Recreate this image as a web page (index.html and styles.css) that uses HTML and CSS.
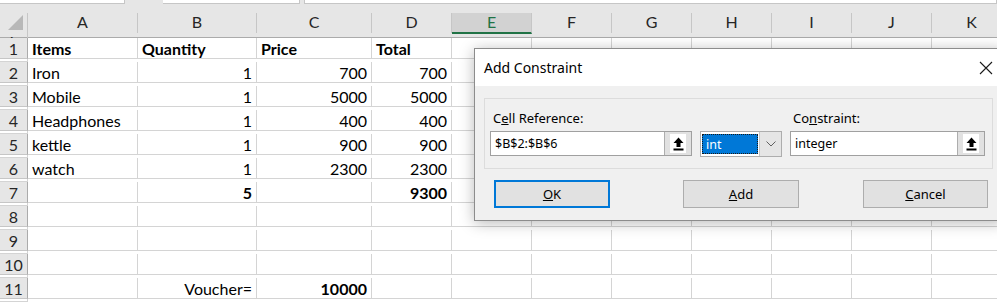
FILE: index.html
```html
<!DOCTYPE html>
<html lang="en">
<head>
    <meta charset="UTF-8">
    <title>Solver - Add Constraint</title>
    <link rel="stylesheet" href="styles.css">
</head>
<body>
    <div class="sheet">
        <div class="top-strip">
            <span class="strip-box box-1"></span>
            <span class="strip-box box-2"></span>
            <span class="strip-box box-3"></span>
        </div>

        <div class="row head-row">
            <div class="corner"><span class="corner-tri"></span></div>
            <div class="col-head">A</div>
            <div class="col-head">B</div>
            <div class="col-head">C</div>
            <div class="col-head">D</div>
            <div class="col-head selected">E</div>
            <div class="col-head">F</div>
            <div class="col-head">G</div>
            <div class="col-head">H</div>
            <div class="col-head">I</div>
            <div class="col-head">J</div>
            <div class="col-head">K</div>
            <div class="col-head">L</div>
        </div>

        <div class="row">
            <div class="row-head">1</div>
            <div class="cell bold">Items</div>
            <div class="cell bold">Quantity</div>
            <div class="cell bold">Price</div>
            <div class="cell bold">Total</div>
            <div class="cell"></div><div class="cell"></div><div class="cell"></div><div class="cell"></div>
            <div class="cell"></div><div class="cell"></div><div class="cell"></div><div class="cell"></div>
        </div>
        <div class="row">
            <div class="row-head">2</div>
            <div class="cell">Iron</div>
            <div class="cell num">1</div>
            <div class="cell num">700</div>
            <div class="cell num">700</div>
            <div class="cell"></div><div class="cell"></div><div class="cell"></div><div class="cell"></div>
            <div class="cell"></div><div class="cell"></div><div class="cell"></div><div class="cell"></div>
        </div>
        <div class="row">
            <div class="row-head">3</div>
            <div class="cell">Mobile</div>
            <div class="cell num">1</div>
            <div class="cell num">5000</div>
            <div class="cell num">5000</div>
            <div class="cell"></div><div class="cell"></div><div class="cell"></div><div class="cell"></div>
            <div class="cell"></div><div class="cell"></div><div class="cell"></div><div class="cell"></div>
        </div>
        <div class="row">
            <div class="row-head">4</div>
            <div class="cell">Headphones</div>
            <div class="cell num">1</div>
            <div class="cell num">400</div>
            <div class="cell num">400</div>
            <div class="cell"></div><div class="cell"></div><div class="cell"></div><div class="cell"></div>
            <div class="cell"></div><div class="cell"></div><div class="cell"></div><div class="cell"></div>
        </div>
        <div class="row">
            <div class="row-head">5</div>
            <div class="cell">kettle</div>
            <div class="cell num">1</div>
            <div class="cell num">900</div>
            <div class="cell num">900</div>
            <div class="cell"></div><div class="cell"></div><div class="cell"></div><div class="cell"></div>
            <div class="cell"></div><div class="cell"></div><div class="cell"></div><div class="cell"></div>
        </div>
        <div class="row">
            <div class="row-head">6</div>
            <div class="cell">watch</div>
            <div class="cell num">1</div>
            <div class="cell num">2300</div>
            <div class="cell num">2300</div>
            <div class="cell"></div><div class="cell"></div><div class="cell"></div><div class="cell"></div>
            <div class="cell"></div><div class="cell"></div><div class="cell"></div><div class="cell"></div>
        </div>
        <div class="row">
            <div class="row-head">7</div>
            <div class="cell"></div>
            <div class="cell num bold">5</div>
            <div class="cell"></div>
            <div class="cell num bold">9300</div>
            <div class="cell"></div><div class="cell"></div><div class="cell"></div><div class="cell"></div>
            <div class="cell"></div><div class="cell"></div><div class="cell"></div><div class="cell"></div>
        </div>
        <div class="row">
            <div class="row-head">8</div>
            <div class="cell"></div><div class="cell"></div><div class="cell"></div><div class="cell"></div>
            <div class="cell"></div><div class="cell"></div><div class="cell"></div><div class="cell"></div>
            <div class="cell"></div><div class="cell"></div><div class="cell"></div><div class="cell"></div>
        </div>
        <div class="row">
            <div class="row-head">9</div>
            <div class="cell"></div><div class="cell"></div><div class="cell"></div><div class="cell"></div>
            <div class="cell"></div><div class="cell"></div><div class="cell"></div><div class="cell"></div>
            <div class="cell"></div><div class="cell"></div><div class="cell"></div><div class="cell"></div>
        </div>
        <div class="row">
            <div class="row-head">10</div>
            <div class="cell"></div><div class="cell"></div><div class="cell"></div><div class="cell"></div>
            <div class="cell"></div><div class="cell"></div><div class="cell"></div><div class="cell"></div>
            <div class="cell"></div><div class="cell"></div><div class="cell"></div><div class="cell"></div>
        </div>
        <div class="row">
            <div class="row-head">11</div>
            <div class="cell"></div>
            <div class="cell num">Voucher=</div>
            <div class="cell num bold">10000</div>
            <div class="cell"></div>
            <div class="cell"></div><div class="cell"></div><div class="cell"></div><div class="cell"></div>
            <div class="cell"></div><div class="cell"></div><div class="cell"></div><div class="cell"></div>
        </div>

        <!-- Solver "Add Constraint" dialog floating over the sheet -->
        <div class="dialog">
            <div class="title-bar">
                <span class="title">Add Constraint</span>
                <svg class="close" width="14" height="14" viewBox="0 0 14 14">
                    <path d="M1 1 L13 13 M13 1 L1 13" stroke="#1a1a1a" stroke-width="1.1" fill="none"/>
                </svg>
            </div>
            <div class="dialog-body">
                <div class="group">
                    <div class="field field-ref">
                        <label>C<u>e</u>ll Reference:</label>
                        <div class="ref-input">
                            <span class="ref-text">$B$2:$B$6</span>
                            <span class="ref-btn">
                                <span class="ref-icon">
                                    <svg width="11" height="14" viewBox="0 0 11 14">
                                        <path d="M5.5 0.5 L10.5 6 H7.5 V10 H3.5 V6 H0.5 Z" fill="#000"/>
                                        <rect x="0.5" y="11.5" width="10" height="2" fill="#000"/>
                                    </svg>
                                </span>
                            </span>
                        </div>
                    </div>
                    <div class="field field-op">
                        <label>&nbsp;</label>
                        <div class="combo">
                            <span class="combo-value"><span class="combo-sel">int</span></span>
                            <span class="combo-btn">
                                <svg width="10" height="6" viewBox="0 0 10 6">
                                    <path d="M0.5 0.5 L5 5 L9.5 0.5" stroke="#606060" stroke-width="1" fill="none"/>
                                </svg>
                            </span>
                        </div>
                    </div>
                    <div class="field field-con">
                        <label>Co<u>n</u>straint:</label>
                        <div class="ref-input">
                            <span class="ref-text">integer</span>
                            <span class="ref-btn">
                                <span class="ref-icon">
                                    <svg width="11" height="14" viewBox="0 0 11 14">
                                        <path d="M5.5 0.5 L10.5 6 H7.5 V10 H3.5 V6 H0.5 Z" fill="#000"/>
                                        <rect x="0.5" y="11.5" width="10" height="2" fill="#000"/>
                                    </svg>
                                </span>
                            </span>
                        </div>
                    </div>
                </div>
                <div class="buttons">
                    <button class="btn btn-ok default"><u>O</u>K</button>
                    <button class="btn btn-add"><u>A</u>dd</button>
                    <button class="btn btn-cancel"><u>C</u>ancel</button>
                </div>
            </div>
        </div>
    </div>
</body>
</html>
```

FILE: styles.css
```css
* {
    margin: 0;
    padding: 0;
    box-sizing: border-box;
}

html, body {
    width: 100%;
    height: 100%;
    overflow: hidden;
    background: #ffffff;
}

.sheet {
    position: relative;
    width: 997px;
    height: 302px;
    overflow: hidden;
    font-family: "Lato", "Liberation Sans", sans-serif;
    font-size: 16px;
    color: #000000;
}

/* remains of the formula bar above the grid */
.top-strip {
    position: relative;
    height: 13px;
    background: #e6e6e6;
    display: flex;
    gap: 0;
}

.strip-box {
    height: 4px;
    background: #ffffff;
    border-bottom: 1px solid #c6c6c6;
    border-right: 1px solid #c6c6c6;
}

.box-1 { width: 125px; }
.box-2 { width: 137px; margin-left: 38px; }
.box-3 { flex: 1; margin-left: 4px; border-left: 1px solid #c6c6c6; }

.row {
    display: grid;
    grid-template-columns: 28px 110px 119px 115px repeat(8, 80px);
    height: 24px;
}

.head-row {
    height: 25px;
    background: #e6e6e6;
    border-bottom: 1px solid #ababab;
}

.corner {
    display: flex;
    align-items: flex-end;
    justify-content: flex-end;
    padding: 0 4px 3px 0;
    border-right: 1px solid #c6c6c6;
}

.corner-tri {
    width: 15px;
    height: 15px;
    background: #b8b8b8;
    clip-path: polygon(100% 0, 100% 100%, 0 100%);
}

.col-head {
    display: flex;
    align-items: flex-end;
    justify-content: center;
    padding-bottom: 2px;
    border-right: 1px solid #c6c6c6;
    color: #262626;
    line-height: 18px;
}

.col-head.selected {
    background: #d2d2d2;
    color: #217346;
    border-bottom: 2px solid #217346;
    margin-bottom: -1px;
    padding-bottom: 1px;
}

.row-head {
    display: flex;
    align-items: flex-end;
    justify-content: center;
    padding-bottom: 0;
    background: #e6e6e6;
    border-right: 1px solid #ababab;
    border-bottom: 1px solid #c6c6c6;
    color: #262626;
    line-height: 18px;
}

.cell {
    display: flex;
    align-items: flex-end;
    padding: 0 4px 0 4px;
    border-right: 1px solid #d4d4d4;
    border-bottom: 1px solid #d4d4d4;
    line-height: 18px;
    white-space: nowrap;
    overflow: hidden;
}

.cell.num {
    justify-content: flex-end;
}

.cell.bold {
    font-weight: 700;
}

/* dialog */
.dialog {
    position: absolute;
    left: 474px;
    top: 48px;
    width: 530px;
    height: 173px;
    background: #f0f0f0;
    border: 1px solid #8c8c8c;
    box-shadow: 0 2px 14px rgba(0, 0, 0, 0.28);
    font-family: "Noto Sans", "Liberation Sans", sans-serif;
    font-size: 13px;
    color: #000000;
}

.title-bar {
    height: 37px;
    background: #ffffff;
    display: flex;
    align-items: center;
    justify-content: space-between;
    padding: 0 10px 0 9px;
}

.title {
    font-size: 14px;
    color: #000000;
}

.close {
    margin-right: 0;
}

.dialog-body {
    padding: 12px 10px 0 9px;
}

.group {
    height: 71px;
    border: 1px solid #dcdcdc;
    display: flex;
    padding: 11px 0 0 5px;
    gap: 8px;
}

.field label {
    display: block;
    height: 21px;
    line-height: 17px;
    padding-left: 3px;
    white-space: nowrap;
}

.ref-input {
    display: flex;
    height: 25px;
    background: #ffffff;
    border: 1px solid #a0a0a0;
}

.ref-text {
    flex: 1;
    display: flex;
    align-items: center;
    padding-left: 4px;
    font-size: 12.5px;
}

.ref-btn {
    width: 27px;
    display: flex;
    align-items: center;
    justify-content: center;
    background: #e1e1e1;
    border-left: 1px solid #adadad;
}

.ref-icon {
    width: 16px;
    height: 19px;
    display: flex;
    align-items: center;
    justify-content: center;
    background: #ffffff;
}

.field-ref { width: 202px; }
.field-op  { width: 82px; }
.field-con { width: 195px; }

.combo {
    display: flex;
    height: 26px;
    background: #ffffff;
    border: 1px solid #adadad;
}

.combo-value {
    flex: 1;
    padding: 2px 1px 2px 1px;
    display: flex;
}

.combo-sel {
    flex: 1;
    background: #0078d7;
    color: #ffffff;
    outline: 1px dotted #1a1a1a;
    outline-offset: -1px;
    display: flex;
    align-items: center;
    padding-left: 4px;
    font-size: 12.5px;
}

.combo-btn {
    width: 22px;
    display: flex;
    align-items: center;
    justify-content: center;
    background: #e5e5e5;
    border-left: 1px solid #c6c6c6;
}

.buttons {
    display: flex;
    margin-top: 11px;
}

.btn {
    height: 28px;
    background: #e1e1e1;
    border: 1px solid #adadad;
    font-family: inherit;
    font-size: 13px;
    color: #000000;
}

.btn.default {
    border: 2px solid #0078d7;
}

.btn-ok {
    width: 116px;
    margin-left: 10px;
}

.btn-add {
    width: 116px;
    margin-left: 73px;
}

.btn-cancel {
    width: 125px;
    margin-left: 64px;
}
```
